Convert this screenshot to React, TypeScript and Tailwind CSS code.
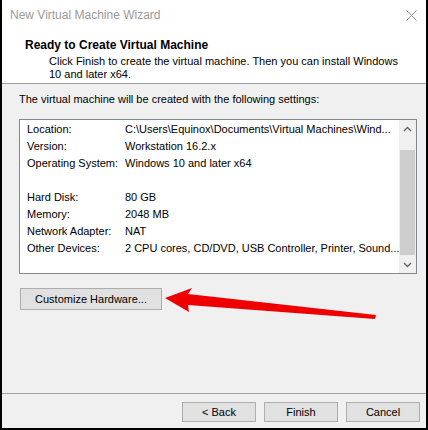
import React from 'react';

const font = { fontFamily: '"Liberation Sans", Arial, sans-serif' };

const rows: [string, string][] = [
  ['Location:', 'C:\\Users\\Equinox\\Documents\\Virtual Machines\\Wind...'],
  ['Version:', 'Workstation 16.2.x'],
  ['Operating System:', 'Windows 10 and later x64'],
  ['', ''],
  ['Hard Disk:', '80 GB'],
  ['Memory:', '2048 MB'],
  ['Network Adapter:', 'NAT'],
  ['Other Devices:', '2 CPU cores, CD/DVD, USB Controller, Printer, Sound...'],
];

function Button({ label, className }: { label: string; className: string }) {
  return (
    <div
      className={`flex items-center justify-center bg-[#e1e1e1] border border-[#adadad] text-[11px] text-black ${className}`}
    >
      {label}
    </div>
  );
}

export default function App() {
  return (
    <div
      className="relative w-[428px] h-[430px] bg-[#f0f0f0] border-l-2 border-r-2 border-b-2 border-black flex flex-col overflow-hidden"
      style={font}
    >
      {/* title + header */}
      <div className="bg-white h-[84px] border-b border-[#a0a0a0] flex flex-col">
        <div className="h-[30px] flex items-center justify-between pl-[8px] pr-[9px]">
          <span className="text-[12px] text-[#9a9a9a]">New Virtual Machine Wizard</span>
          <svg width="11" height="11" viewBox="0 0 11 11">
            <path d="M0.5 0.5 L10.5 10.5 M10.5 0.5 L0.5 10.5" stroke="#8a8a8a" strokeWidth="1" />
          </svg>
        </div>
        <div className="pl-[23px] pt-[7px]">
          <div className="text-[12px] font-bold text-black leading-[16px]">
            Ready to Create Virtual Machine
          </div>
          <div className="pl-[24px] pt-[2px] text-[11px] text-black leading-[13px] w-[380px]">
            Click Finish to create the virtual machine. Then you can install Windows 10 and later
            x64.
          </div>
        </div>
      </div>

      <div className="px-[17px] pt-[7px] text-[11px] text-black leading-[16px]">
        The virtual machine will be created with the following settings:
      </div>

      {/* settings list */}
      <div className="mx-[17px] mt-[12px] h-[155px] w-[398px] bg-white border border-[#828790] flex">
        <div className="flex-1 min-w-0 overflow-hidden pl-[7px] pt-[1px]">
          {rows.map(([k, v], i) => (
            <div key={i} className="flex h-[17px] items-center text-[11px] text-black whitespace-nowrap">
              <span className="w-[98px] shrink-0">{k}</span>
              <span>{v}</span>
            </div>
          ))}
        </div>
        <div className="w-[17px] shrink-0 bg-[#f0f0f0] flex flex-col">
          <div className="h-[17px] flex items-center justify-center">
            <svg width="9" height="6" viewBox="0 0 9 6">
              <path d="M1 5 L4.5 1.5 L8 5" stroke="#606060" strokeWidth="1.3" fill="none" />
            </svg>
          </div>
          <div className="mx-[1px] mt-[13px] h-[105px] bg-[#cdcdcd]" />
          <div className="flex-1 flex items-end justify-center pb-[5px]">
            <svg width="9" height="6" viewBox="0 0 9 6">
              <path d="M1 1 L4.5 4.5 L8 1" stroke="#606060" strokeWidth="1.3" fill="none" />
            </svg>
          </div>
        </div>
      </div>

      <div className="px-[18px] pt-[14px]">
        <Button label="Customize Hardware..." className="w-[142px] h-[22px]" />
      </div>

      <div className="flex-1" />

      {/* footer */}
      <div className="border-t border-[#a0a0a0] h-[35px] flex justify-end items-start gap-[8px] pr-[6px] pt-[8px]">
        <Button label="< Back" className="w-[74px] h-[20px]" />
        <Button label="Finish" className="w-[74px] h-[20px]" />
        <Button label="Cancel" className="w-[74px] h-[20px]" />
      </div>

      {/* annotation arrow */}
      <svg className="absolute left-[-2px] top-0 pointer-events-none" width="428" height="430">
        <polygon
          points="165,298 192,288 188,294 376,315 375,319 188,305 189,312"
          fill="#ee0000"
        />
      </svg>
    </div>
  );
}
